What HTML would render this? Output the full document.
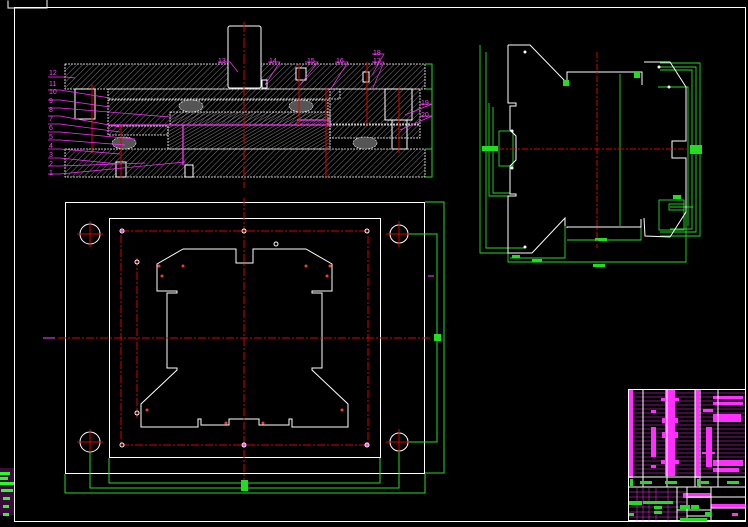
<!DOCTYPE html>
<html><head><style>html,body{margin:0;padding:0;background:#000;}svg{display:block}</style></head>
<body>
<svg width="748" height="527" viewBox="0 0 748 527" xmlns="http://www.w3.org/2000/svg" font-family="Liberation Sans, sans-serif">
<defs>
<pattern id="h" width="4" height="4" patternUnits="userSpaceOnUse" patternTransform="rotate(45)">
<line x1="0" y1="0" x2="0" y2="4" stroke="#999" stroke-width="0.8"/>
</pattern>
<pattern id="h2" width="3" height="3" patternUnits="userSpaceOnUse" patternTransform="rotate(60)">
<line x1="0" y1="0" x2="0" y2="3" stroke="#aaa" stroke-width="0.8"/>
</pattern>
</defs>
<rect width="748" height="527" fill="#000"/>
<g fill="none" stroke="#fff" stroke-width="1">
<rect x="14.5" y="7.5" width="731" height="514"/>
<polyline points="8,0.5 8,8 47,8 47,0"/>
</g>
<g>
<rect x="0" y="468" width="14" height="47" fill="#3a0a3a"/>
<rect x="0" y="472" width="10" height="3" fill="#2f2"/><rect x="0" y="477" width="8" height="3" fill="#2f2"/>
<rect x="0" y="482" width="14" height="3" fill="#2f2"/><rect x="1" y="489" width="12" height="3" fill="#2f2"/>
<rect x="3" y="497" width="7" height="3" fill="#2f2"/><rect x="3" y="505" width="6" height="3" fill="#2f2"/><rect x="3" y="513" width="6" height="3" fill="#2f2"/>
</g>

<g stroke="#fff" stroke-width="0.8" stroke-dasharray="2,1">
<rect x="65" y="64" width="360" height="25" fill="url(#h)"/>
<rect x="65" y="149" width="360" height="28" fill="url(#h)"/>
<rect x="108" y="89" width="232" height="10" fill="url(#h)"/>
<rect x="108" y="100" width="220" height="25" fill="url(#h)"/>
<rect x="170" y="112" width="160" height="13" fill="url(#h2)"/>
<rect x="168" y="125" width="162" height="24" fill="url(#h2)"/>
<rect x="330" y="89" width="90" height="35" fill="url(#h)"/>
<rect x="330" y="125" width="90" height="13" fill="url(#h)"/>
<rect x="108" y="126" width="60" height="9" fill="url(#h)"/>
</g>
<g stroke="#fff" stroke-width="1" fill="#000">
<rect x="228" y="26" width="33" height="62" rx="2"/>
<rect x="75" y="89" width="20" height="30" fill="none"/>
<rect x="385" y="89" width="27" height="31" fill="none"/>
<rect x="392" y="120" width="15" height="29" fill="none"/>
<rect x="116" y="162" width="10" height="15"/>
<rect x="185" y="165" width="8" height="12"/>
<rect x="296" y="68" width="10" height="12"/>
<rect x="363" y="72" width="6" height="10"/>
<rect x="262" y="80" width="5" height="8"/>
</g>
<g fill="#555" stroke="#fff" stroke-width="0.6" stroke-dasharray="2,1">
<ellipse cx="191" cy="106" rx="12" ry="6"/><ellipse cx="301" cy="106" rx="12" ry="6"/>
<ellipse cx="124" cy="143" rx="12" ry="6"/><ellipse cx="365" cy="143" rx="12" ry="6"/>
</g>
<g stroke="#ff30ff" stroke-width="1.3"><line x1="110" y1="125" x2="332" y2="125"/><line x1="183" y1="125" x2="183" y2="165"/><line x1="297" y1="120" x2="330" y2="120"/></g>
<g stroke="#d00" stroke-width="1">
<line x1="244" y1="22" x2="244" y2="188" stroke-dasharray="10,2,2,2"/>
<line x1="92" y1="84" x2="92" y2="153"/><line x1="121" y1="125" x2="121" y2="178"/>
<line x1="299" y1="64" x2="299" y2="125"/><line x1="326" y1="88" x2="326" y2="178"/>
<line x1="367" y1="62" x2="367" y2="125"/><line x1="399" y1="88" x2="399" y2="153"/>
</g>
<g stroke="#ff30ff" stroke-width="0.7" fill="none">
<path d="M48 77 H66 L75 78"/><path d="M48 90 H60 L110 98"/><path d="M48 100 H60 L110 107"/><path d="M48 108 H60 L170 117"/>
<path d="M48 116 H60 L120 127"/><path d="M48 124 H60 L120 132"/><path d="M48 132 H60 L135 139"/><path d="M48 140 H60 L125 145"/>
<path d="M48 149 H60 L120 154"/><path d="M48 158 H60 L118 164"/><path d="M48 166 H60 L145 163"/><path d="M48 174 H60 L185 162"/>
<path d="M218 62 H230 L238 72"/><path d="M268 62 H280 L265 85"/><path d="M305 62 H318 L300 85"/><path d="M335 62 H348 L330 90"/>
<path d="M372 54 H384 L372 75"/><path d="M372 62 H384 L372 90"/><path d="M420 104 H432 L405 115"/><path d="M420 116 H432 L400 130"/>
</g>
<g fill="#ff40ff" font-size="7">
<text x="49" y="75">12</text><text x="49" y="86">11</text><text x="49" y="94">10</text><text x="49" y="103">9</text><text x="49" y="112">8</text>
<text x="49" y="121">7</text><text x="49" y="130">6</text><text x="49" y="139">5</text><text x="49" y="148">4</text><text x="49" y="157">3</text>
<text x="49" y="166">2</text><text x="49" y="175">1</text>
<text x="218" y="63">13</text><text x="269" y="63">14</text><text x="307" y="63">15</text><text x="336" y="63">16</text>
<text x="373" y="55">18</text><text x="373" y="63">17</text><text x="421" y="105">19</text><text x="421" y="117">20</text>
</g>
<g stroke="#2d2" stroke-width="1" fill="none"><path d="M425 64 H432 V177 H425 M425 89 H432 M425 149 H432"/></g>

<g stroke="#2d2" stroke-width="0.9" fill="none">
<polyline points="480,45 480,253 525,253"/>
<polyline points="486,52 486,248 525,248"/>
<polyline points="489,103 489,196 515,196"/><polyline points="493,107 493,193 510,193"/>
<rect x="499" y="131" width="14" height="35"/>
<polyline points="508,228 508,262 686,262 686,163"/>
<polyline points="510,258 565,258 565,218"/>
<polyline points="567,240 641,240 641,220"/>
<line x1="620" y1="74" x2="620" y2="226"/>
<polyline points="660,63 700,63 700,236 660,236"/><polyline points="660,67 696,67 696,232 660,232"/>
<polyline points="660,70 692,70 692,229 670,229"/><polyline points="658,87 688,87 688,226"/>
<polyline points="670,207 693,207"/>
<rect x="659" y="200" width="25" height="30"/><rect x="669" y="204" width="15" height="6"/>
</g>
<g stroke="#fff" stroke-width="1" fill="none">
<polyline points="508,45 530,45 566,82 567,84 567,72 642,72 642,85"/>
<polyline points="508,45 508,103 516,103 516,106 510,106 510,130 516,136 516,160 510,166 510,194 516,194 516,196 508,196 508,253 532,253 565,218 565,226"/>
<polyline points="567,228 567,227 641,227 641,219"/>
<polyline points="644,62 670,62 686,87 686,141 672,141 672,158 686,158 686,212 670,237 645,236 644,218"/>
</g>
<g fill="#2d2"><rect x="482" y="146" width="16" height="5"/><rect x="690" y="145" width="12" height="9"/><rect x="595" y="238" width="12" height="3"/><rect x="512" y="255" width="8" height="3"/><rect x="532" y="259" width="10" height="3"/><rect x="593" y="264" width="12" height="3"/><rect x="563" y="80" width="6" height="6"/><rect x="634" y="72" width="6" height="6"/><rect x="673" y="195" width="8" height="4"/></g>
<g stroke="#d00" stroke-width="1" stroke-dasharray="6,2,2,2"><line x1="498" y1="149" x2="690" y2="149"/><line x1="597" y1="52" x2="597" y2="248"/></g>
<g fill="#fff"><circle cx="525" cy="52" r="1.5"/><circle cx="512" cy="131" r="1.5"/><circle cx="512" cy="168" r="1.5"/><circle cx="525" cy="247" r="1.5"/><circle cx="659" cy="67" r="1.5"/><circle cx="669" cy="87" r="1.5"/></g>

<g stroke="#fff" stroke-width="1" fill="none">
<rect x="65.5" y="202.5" width="359" height="271"/>
<rect x="109.5" y="218.5" width="271" height="239"/>
<circle cx="90" cy="234" r="10"/><circle cx="399" cy="234" r="9"/><circle cx="90" cy="442" r="10"/><circle cx="399" cy="442" r="9"/>
<polyline points="183,249 236,249 236,263 253,263 253,249 306,249 332,264 332,291 312,291 312,293 322,293 322,368 312,368 312,370 348,404 348,427 292,427 292,419 289,419 289,425 259,425 259,419 229,419 229,425 201,425 201,419 198,419 198,427 141,427 141,404 177,370 177,368 167,368 167,293 177,293 177,291 157,291 157,264 183,249"/>
</g>
<g stroke="#d00" stroke-width="1" stroke-dasharray="8,2,2,2" fill="none">
<rect x="121" y="231" width="247" height="214"/>
<line x1="244" y1="198" x2="244" y2="480"/>
<line x1="58" y1="338" x2="430" y2="338"/>
<line x1="137" y1="258" x2="137" y2="418"/>
</g>
<g stroke="#d00" stroke-width="1">
<path d="M77 234h26M90 221v26M386 234h26M399 221v26M77 442h26M90 429v26M386 442h26M399 429v26"/>
</g>
<g stroke="#fff" stroke-width="1" fill="none">
<circle cx="122" cy="231" r="2"/><circle cx="244" cy="231" r="2"/><circle cx="367" cy="231" r="2"/>
<circle cx="122" cy="445" r="2"/><circle cx="244" cy="445" r="2"/><circle cx="367" cy="445" r="2"/>
<circle cx="137" cy="262" r="2"/><circle cx="137" cy="413" r="2"/><circle cx="276" cy="244" r="2"/>
</g>
<g fill="#ff40ff"><circle cx="122" cy="231" r="1.2"/><circle cx="244" cy="445" r="1.5"/><circle cx="367" cy="445" r="1.5"/></g>
<g fill="#f33"><circle cx="159" cy="266" r="1.5"/><circle cx="183" cy="266" r="1.5"/><circle cx="162" cy="276" r="1.5"/><circle cx="306" cy="266" r="1.5"/><circle cx="330" cy="266" r="1.5"/><circle cx="327" cy="276" r="1.5"/><circle cx="147" cy="410" r="1.5"/><circle cx="342" cy="410" r="1.5"/><circle cx="226" cy="423" r="1.5"/><circle cx="263" cy="423" r="1.5"/></g>
<g stroke="#ff40ff" stroke-width="1"><line x1="43" y1="338" x2="55" y2="338"/><line x1="428" y1="276" x2="434" y2="276"/></g>
<g stroke="#2d2" stroke-width="1" fill="none">
<path d="M65 474 V493 H425 V474 M90 452 V488 H399 V452 M109 458 V483 H380 V458"/>
<path d="M425 202 H444 V473 H425 M409 234 H437 V442 H409"/>
</g>
<g fill="#2d2"><rect x="241" y="480" width="7" height="11"/><rect x="434" y="334" width="7" height="7"/></g>

<g>
<rect x="628.5" y="389.5" width="117" height="131" fill="none" stroke="#fff"/>
<g fill="#ff30ff">
<rect x="629" y="390" width="4" height="88"/>
<rect x="665" y="390" width="10" height="86"/><rect x="661" y="398" width="18" height="3"/><rect x="662" y="418" width="16" height="5"/><rect x="662" y="432" width="16" height="6"/><rect x="661" y="460" width="18" height="4"/>
<rect x="651" y="410" width="5" height="3"/><rect x="651" y="427" width="5" height="30"/><rect x="651" y="465" width="5" height="3"/>
<rect x="695" y="390" width="4" height="88"/>
<rect x="703" y="409" width="10" height="3"/><rect x="706" y="427" width="6" height="40"/><rect x="702" y="452" width="13" height="2"/>
<rect x="713" y="396" width="30" height="3"/><rect x="713" y="402" width="30" height="3"/><rect x="713" y="414" width="28" height="8"/><rect x="713" y="460" width="30" height="6"/><rect x="713" y="468" width="26" height="4"/>
<rect x="683" y="493" width="28" height="5"/><rect x="711" y="504" width="34" height="4"/><rect x="732" y="513" width="6" height="3"/>
</g>
<g stroke="#ff30ff" stroke-width="0.5">
<path d="M629 393H745M629 397H745M629 401H745M629 405H745M629 409H745M629 413H745M629 417H745M629 421H745M629 425H745M629 429H745M629 433H745M629 437H745M629 441H745M629 445H745M629 449H745M629 453H745M629 457H745M629 461H745M629 465H745M629 469H745M629 473H745"/>
<path d="M629 492H686M629 497H686M629 502H686M629 507H686M629 512H686M629 517H686M637 488V521M643 488V521M649 488V521M656 488V521M668 488V521"/>
</g>
<g stroke="#fff" stroke-width="1" fill="none">
<path d="M643 389V487M667 389V487M695 389V487M700 389V487M718 389V487M628 477H745M628 487H745M687 487V521M677 487V521M711 487V521M687 497H745M711 508H745M677 510H711M687 516H711"/>
</g>
<g fill="#2d2">
<rect x="630" y="479" width="3" height="7"/><rect x="640" y="481" width="12" height="3"/><rect x="665" y="481" width="12" height="3"/><rect x="697" y="479" width="3" height="7"/><rect x="701" y="481" width="8" height="3"/><rect x="727" y="481" width="12" height="3"/>
<rect x="629" y="501" width="13" height="4"/><rect x="643" y="501" width="30" height="3"/><rect x="654" y="506" width="8" height="3"/><rect x="654" y="511" width="8" height="3"/><rect x="629" y="513" width="5" height="3"/>
<rect x="680" y="505" width="10" height="4"/><rect x="691" y="505" width="8" height="4"/><rect x="705" y="512" width="6" height="4"/><rect x="680" y="518" width="27" height="3"/>
</g>
</g>
</svg>
</body></html>
